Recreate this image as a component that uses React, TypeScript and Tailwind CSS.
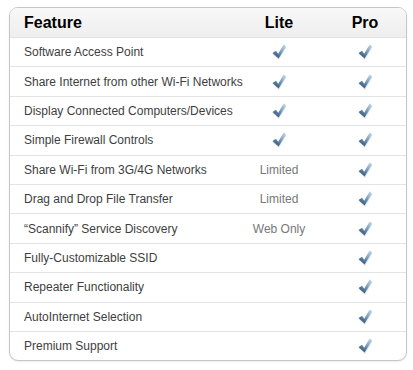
const features: { name: string; lite: string | boolean }[] = [
  { name: "Software Access Point", lite: true },
  { name: "Share Internet from other Wi-Fi Networks", lite: true },
  { name: "Display Connected Computers/Devices", lite: true },
  { name: "Simple Firewall Controls", lite: true },
  { name: "Share Wi-Fi from 3G/4G Networks", lite: "Limited" },
  { name: "Drag and Drop File Transfer", lite: "Limited" },
  { name: "\u201CScannify\u201D Service Discovery", lite: "Web Only" },
  { name: "Fully-Customizable SSID", lite: false },
  { name: "Repeater Functionality", lite: false },
  { name: "AutoInternet Selection", lite: false },
  { name: "Premium Support", lite: false },
];

const Check = () => (
  <svg width="16" height="18" viewBox="0 0 16 18" aria-hidden="true">
    <defs>
      <linearGradient id="chk" x1="0.9" y1="0" x2="0.2" y2="1">
        <stop offset="0" stopColor="#c4daee" />
        <stop offset="0.4" stopColor="#85a8c8" />
        <stop offset="1" stopColor="#2c4a6b" />
      </linearGradient>
    </defs>
    <path d="M1.5 10 L5 7.8 L7.2 10.8 L12.6 1.6 L15.2 3.2 L7.6 15.6 Z" fill="#5a7896" opacity="0.18" transform="translate(0.3 1.4)" />
    <path d="M1.5 10 L5 7.8 L7.2 10.8 L12.6 1.6 L15.2 3.2 L7.6 15.6 Z" fill="url(#chk)" />
  </svg>
);

export default function App() {
  return (
    <div className="w-[413px] h-[370px] bg-white pt-[7px] pl-[9px] font-['Liberation_Sans',Arial,sans-serif]">
      <div className="w-[398px] rounded-[9px] border border-[#c6c6c6] overflow-hidden bg-white shadow-[0_1px_2px_rgba(0,0,0,0.08)]">
        <div className="grid grid-cols-[minmax(0,1fr)_90px_82px] h-[29px] items-center bg-gradient-to-b from-[#f8f8f8] to-[#eeeeee] text-[16px] font-bold text-black">
          <div className="pl-[14px]">Feature</div>
          <div className="text-center">Lite</div>
          <div className="text-center">Pro</div>
        </div>
        {features.map((f) => (
          <div
            key={f.name}
            className="grid grid-cols-[minmax(0,1fr)_90px_82px] h-[29.4px] items-center border-t border-[#e3e3e3] text-[12px]"
          >
            <div className="pl-[14px] text-[#3e3e3e] whitespace-nowrap">{f.name}</div>
            <div className="flex justify-center text-[#777]">
              {f.lite === true ? <Check /> : f.lite ? f.lite : null}
            </div>
            <div className="flex justify-center">
              <Check />
            </div>
          </div>
        ))}
      </div>
    </div>
  );
}
